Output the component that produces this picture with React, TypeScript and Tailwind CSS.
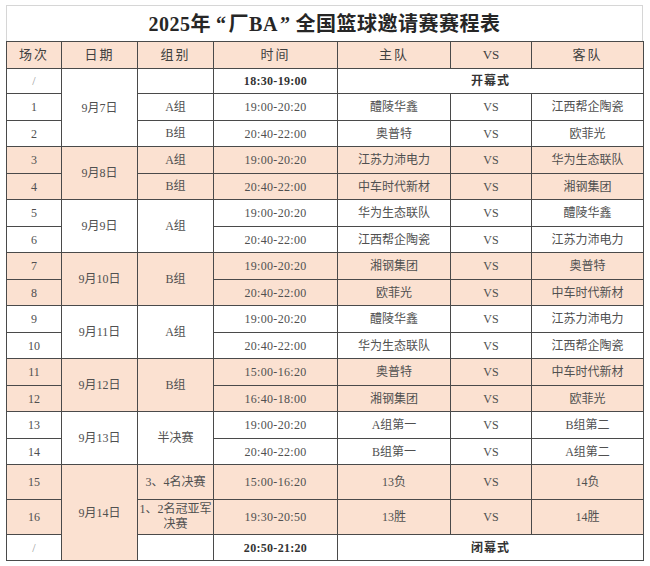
import React from "react";

const PEACH = "bg-[#fbe1d1]";
const td = "border border-[#4a4a4a] text-center align-middle p-0";

type Row = {
  no: string;
  date?: { text: string; span: number; peach?: boolean };
  group?: { text: React.ReactNode; span: number };
  time: string;
  home?: string;
  away?: string;
  ceremony?: string;
  peach?: boolean;
  h: string;
};

const rows: Row[] = [
  { no: "/", date: { text: "9月7日", span: 3 }, group: { text: "", span: 1 }, time: "18:30-19:00", ceremony: "开幕式", h: "h-[25px]" },
  { no: "1", group: { text: "A组", span: 1 }, time: "19:00-20:20", home: "醴陵华鑫", away: "江西帮企陶瓷", h: "h-[27px]" },
  { no: "2", group: { text: "B组", span: 1 }, time: "20:40-22:00", home: "奥普特", away: "欧菲光", h: "h-[26px]" },
  { no: "3", date: { text: "9月8日", span: 2, peach: true }, group: { text: "A组", span: 1 }, time: "19:00-20:20", home: "江苏力沛电力", away: "华为生态联队", peach: true, h: "h-[27px]" },
  { no: "4", group: { text: "B组", span: 1 }, time: "20:40-22:00", home: "中车时代新材", away: "湘钢集团", peach: true, h: "h-[26px]" },
  { no: "5", date: { text: "9月9日", span: 2 }, group: { text: "A组", span: 2 }, time: "19:00-20:20", home: "华为生态联队", away: "醴陵华鑫", h: "h-[27px]" },
  { no: "6", time: "20:40-22:00", home: "江西帮企陶瓷", away: "江苏力沛电力", h: "h-[26px]" },
  { no: "7", date: { text: "9月10日", span: 2, peach: true }, group: { text: "B组", span: 2 }, time: "19:00-20:20", home: "湘钢集团", away: "奥普特", peach: true, h: "h-[27px]" },
  { no: "8", time: "20:40-22:00", home: "欧菲光", away: "中车时代新材", peach: true, h: "h-[26px]" },
  { no: "9", date: { text: "9月11日", span: 2 }, group: { text: "A组", span: 2 }, time: "19:00-20:20", home: "醴陵华鑫", away: "江苏力沛电力", h: "h-[27px]" },
  { no: "10", time: "20:40-22:00", home: "华为生态联队", away: "江西帮企陶瓷", h: "h-[26px]" },
  { no: "11", date: { text: "9月12日", span: 2, peach: true }, group: { text: "B组", span: 2 }, time: "15:00-16:20", home: "奥普特", away: "中车时代新材", peach: true, h: "h-[27px]" },
  { no: "12", time: "16:40-18:00", home: "湘钢集团", away: "欧菲光", peach: true, h: "h-[26px]" },
  { no: "13", date: { text: "9月13日", span: 2 }, group: { text: "半决赛", span: 2 }, time: "19:00-20:20", home: "A组第一", away: "B组第二", h: "h-[27px]" },
  { no: "14", time: "20:40-22:00", home: "B组第一", away: "A组第二", h: "h-[26px]" },
  { no: "15", date: { text: "9月14日", span: 3, peach: true }, group: { text: "3、4名决赛", span: 1 }, time: "15:00-16:20", home: "13负", away: "14负", peach: true, h: "h-[35px]" },
  { no: "16", group: { text: <>1、2名冠亚军<br />决赛</>, span: 1 }, time: "19:30-20:50", home: "13胜", away: "14胜", peach: true, h: "h-[35px]" },
  { no: "/", group: { text: "", span: 1 }, time: "20:50-21:20", ceremony: "闭幕式", h: "h-[26px]" },
];

export default function App() {
  return (
    <div
      className="w-[650px] h-[566px] bg-white pt-[5px] pl-[6px] text-[#505050]"
      style={{ fontFamily: '"Liberation Serif", "Noto Sans CJK SC", serif' }}
    >
      <div className="w-[637px] h-[36px] border border-b-0 border-[#d6d6d6] flex items-center justify-center text-[20px] font-bold text-[#262626] tracking-[0.5px]">
        2025年<span className="ml-[5px] mr-[2px]">“</span>厂BA<span className="ml-[2px] mr-[5px]">”</span>全国篮球邀请赛赛程表
      </div>
      <table className="w-[637px] table-fixed border-collapse text-[12px]">
        <colgroup>
          <col className="w-[55px]" />
          <col className="w-[76px]" />
          <col className="w-[76px]" />
          <col className="w-[124px]" />
          <col className="w-[113px]" />
          <col className="w-[81px]" />
          <col className="w-[112px]" />
        </colgroup>
        <thead>
          <tr className={`h-[27px] ${PEACH} text-[13px] text-[#404040]`}>
            <th className={`${td} font-normal tracking-[2px]`}>场次</th>
            <th className={`${td} font-normal tracking-[2px]`}>日期</th>
            <th className={`${td} font-normal tracking-[2px]`}>组别</th>
            <th className={`${td} font-normal tracking-[2px]`}>时间</th>
            <th className={`${td} font-normal tracking-[2px]`}>主队</th>
            <th className={`${td} font-normal`}>VS</th>
            <th className={`${td} font-normal tracking-[2px]`}>客队</th>
          </tr>
        </thead>
        <tbody>
          {rows.map((r, i) => {
            const bg = r.peach ? PEACH : "bg-white";
            return (
              <tr key={i} className={r.h}>
                <td className={`${td} ${bg} ${r.no === "/" ? "text-[#999]" : ""}`}>{r.no}</td>
                {r.date && (
                  <td rowSpan={r.date.span} className={`${td} ${r.date.peach ? PEACH : "bg-white"}`}>
                    {r.date.text}
                  </td>
                )}
                {r.group && (
                  <td rowSpan={r.group.span} className={`${td} ${bg} leading-[15px]`}>
                    {r.group.text}
                  </td>
                )}
                <td className={`${td} ${bg} tracking-[0.3px] ${r.ceremony ? "font-bold text-[#333]" : ""}`}>
                  {r.time}
                </td>
                {r.ceremony ? (
                  <td colSpan={3} className={`${td} ${bg} font-bold text-[#333] tracking-[1px]`}>
                    {r.ceremony}
                  </td>
                ) : (
                  <>
                    <td className={`${td} ${bg}`}>{r.home}</td>
                    <td className={`${td} ${bg}`}>VS</td>
                    <td className={`${td} ${bg}`}>{r.away}</td>
                  </>
                )}
              </tr>
            );
          })}
        </tbody>
      </table>
    </div>
  );
}
